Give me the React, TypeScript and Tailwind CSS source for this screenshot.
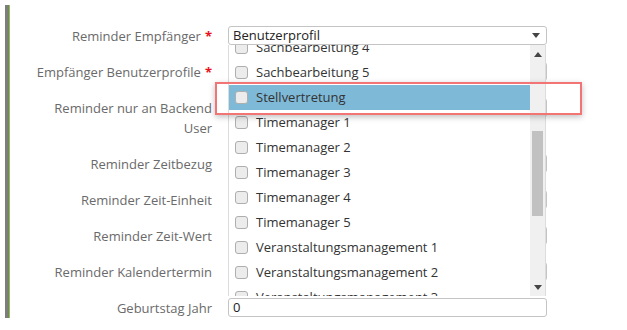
const options = [
  "Sachbearbeitung 4",
  "Sachbearbeitung 5",
  "Stellvertretung",
  "Timemanager 1",
  "Timemanager 2",
  "Timemanager 3",
  "Timemanager 4",
  "Timemanager 5",
  "Veranstaltungsmanagement 1",
  "Veranstaltungsmanagement 2",
  "Veranstaltungsmanagement 3",
]

const Tri = ({ down }: { down?: boolean }) => (
  <svg width="8" height="5" viewBox="0 0 8 5">
    <polygon points={down ? "0,0 8,0 4,5" : "0,5 8,5 4,0"} fill="#444" />
  </svg>
)

const Star = () => <span className="text-[#e8101a] font-bold ml-[4px]">*</span>

const Field = ({ children, className = "" }: { children?: React.ReactNode; className?: string }) => (
  <div className={`w-[319px] h-[19px] border border-[#c4c4c4] rounded-[3px] bg-white flex items-center ${className}`}>
    {children}
  </div>
)

const Row = ({ label, star, children }: { label: string; star?: boolean; children?: React.ReactNode }) => (
  <div className="flex items-start gap-4">
    <div className="w-[180px] text-right leading-[20px] text-[#6a6a6a]">
      {label}
      {star && <Star />}
    </div>
    <div className="relative">{children ?? <Field />}</div>
  </div>
)

const Dropdown = () => (
  <div className="absolute left-0 top-[19px] w-[318px] h-[251px] bg-white border-l border-r border-[#dcdcdc] flex z-10 overflow-hidden">
    <div className="flex-1 overflow-hidden">
      <ul className="-mt-[10px]">
        {options.map((o) => (
          <li
            key={o}
            className={`h-[25px] flex items-center pl-[6px] text-[#333] ${o === "Stellvertretung" ? "bg-[#7fb9d8]" : ""}`}
          >
            <span className="w-[13px] h-[13px] rounded-[3px] border border-[#aeaeae] bg-[#ececec] mr-[8px]" />
            {o}
          </li>
        ))}
      </ul>
    </div>
    <div className="w-[15px] bg-[#f0f0f0] flex flex-col items-center">
      <div className="pt-[7px]"><Tri /></div>
      <div className="mt-[74px] w-[11px] h-[85px] bg-[#c1c1c1]" />
      <div className="mt-auto pb-[6px]"><Tri down /></div>
    </div>
  </div>
)

export default function App() {
  return (
    <div className="relative w-[627px] h-[330px] bg-white pt-[5px] pl-[5px] text-[13px]" style={{ fontFamily: '"Open Sans", "Liberation Sans", sans-serif' }}>
      <div className="border-l-4 border-[#7d7d7d] h-[313px]">
        <div className="border-l border-[#8cc63f] h-full pt-[21px] pl-[22px] flex flex-col gap-4">
          <Row label="Reminder Empfänger" star>
            <Field className="justify-between pl-[4px] pr-[6px] text-[#222]">
              <span>Benutzerprofil</span>
              <Tri down />
            </Field>
            <Dropdown />
          </Row>
          <Row label="Empfänger Benutzerprofile" star />
          <Row label="Reminder nur an Backend User" />
          <Row label="Reminder Zeitbezug" />
          <Row label="Reminder Zeit-Einheit" />
          <Row label="Reminder Zeit-Wert" />
          <Row label="Reminder Kalendertermin" />
          <Row label="Geburtstag Jahr">
            <Field className="pl-[4px] text-[#222]">0</Field>
          </Row>
        </div>
      </div>
      <div className="absolute left-[215px] top-[82px] w-[367px] h-[33px] border-2 border-[#f37474] shadow-[0_2px_6px_rgba(0,0,0,0.25)] z-20" />
    </div>
  )
}
